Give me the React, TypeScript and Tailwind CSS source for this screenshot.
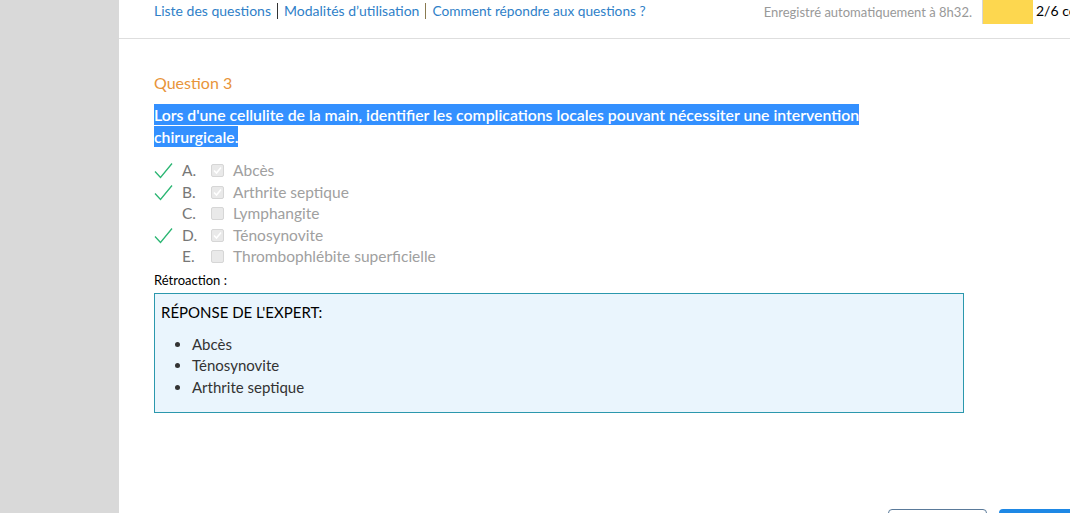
import React from "react";

const Check = () => (
  <svg width="19" height="17" viewBox="0 0 19 17" className="block">
    <path d="M1 9.5 L6.5 15.5 L18 1.5" fill="none" stroke="#2bb673" strokeWidth="1.3" />
  </svg>
);

const Box = ({ checked }: { checked: boolean }) => (
  <span className="w-[13px] h-[13px] rounded-[2px] border border-[#d6d6d6] bg-[#e9e9e9] flex items-center justify-center">
    {checked && (
      <svg width="11" height="11" viewBox="0 0 11 11">
        <path d="M2 5.5 L4.5 8 L9 2.5" fill="none" stroke="#fff" strokeWidth="1.6" />
      </svg>
    )}
  </span>
);

const options = [
  { l: "A.", t: "Abcès", c: true },
  { l: "B.", t: "Arthrite septique", c: true },
  { l: "C.", t: "Lymphangite", c: false },
  { l: "D.", t: "Ténosynovite", c: true },
  { l: "E.", t: "Thrombophlébite superficielle", c: false },
];

export default function App() {
  return (
    <div className="w-[1070px] h-[513px] overflow-hidden flex bg-white" style={{ fontFamily: "Lato, 'Liberation Sans', sans-serif" }}>
      <div className="w-[119px] shrink-0 bg-[#d9d9d9]" />
      <div className="flex-1 min-w-0 flex flex-col relative">
        <div className="h-[39px] border-b border-[#dedede] flex items-start shrink-0">
          <div className="pl-[35px] pt-[2px] flex items-center text-[14px] text-[#2f7fc8] leading-[18px] whitespace-nowrap">
            <span>Liste des questions</span>
            <span className="mx-[6px] w-px h-[16px] bg-[#333]" />
            <span>Modalités d’utilisation</span>
            <span className="mx-[6px] w-px h-[16px] bg-[#8a7a50]" />
            <span className="text-[13.7px]">Comment répondre aux questions ?</span>
          </div>
          <div className="ml-auto flex items-start">
            <span className="pt-[3px] text-[13px] leading-[18px] text-[#999] whitespace-nowrap">Enregistré automatiquement à 8h32.</span>
            <div className="ml-[10px] h-[24px] flex border-l border-[#d6d6d6]">
              <div className="w-[50px] bg-[#fdd74f]" />
              <div className="w-[37px] overflow-hidden pl-[3px] pt-[2px] text-[14px] leading-[18px] text-black whitespace-nowrap">2/6 complétées</div>
            </div>
          </div>
        </div>
        <div className="pl-[35px] pt-[34px]">
          <div className="text-[16px] leading-[20px] text-[#e8943a]">Question 3</div>
          <div className="mt-[11px] w-[720px] text-[15.8px] leading-[22px] font-semibold">
            <span className="bg-[#3390ff] text-white py-[1px]">
              Lors d'une cellulite de la main, identifier les complications locales pouvant nécessiter une intervention chirurgicale.
            </span>
          </div>
          <div className="mt-[12px] flex flex-col">
            {options.map((o) => (
              <div key={o.l} className="h-[21.5px] flex items-center text-[15.5px] text-[#a0a0a0]">
                <span className="w-[28px] flex items-center">{o.c && <Check />}</span>
                <span className="w-[29px] text-[#777]">{o.l}</span>
                <Box checked={o.c} />
                <span className="ml-[9px]">{o.t}</span>
              </div>
            ))}
          </div>
          <div className="mt-[4px] text-[13px] leading-[17px] text-black">Rétroaction :</div>
          <div className="mt-[4px] w-[810px] h-[120px] border border-[#2b98ad] bg-[#eaf5fd] px-[6px] pt-[8px]">
            <div className="text-[15px] leading-[20px] text-black">RÉPONSE DE L'EXPERT:</div>
            <ul className="mt-[12px] list-disc pl-[31px] text-[15px] leading-[21.5px] text-[#333]">
              <li>Abcès</li>
              <li>Ténosynovite</li>
              <li>Arthrite septique</li>
            </ul>
          </div>
        </div>
        <div className="absolute left-[769px] top-[509px] flex gap-[12px]">
          <div className="w-[99px] h-[30px] rounded-[4px] border border-[#5a7a9a] bg-white" />
          <div className="w-[80px] h-[30px] rounded-[4px] bg-[#1e88e5]" />
        </div>
      </div>
    </div>
  );
}
